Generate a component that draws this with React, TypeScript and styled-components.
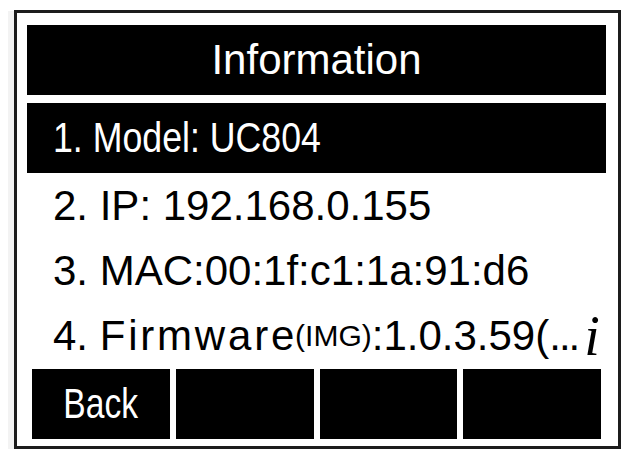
import React from "react";
import styled, { createGlobalStyle } from "styled-components";

const Global = createGlobalStyle`
  html, body { margin: 0; padding: 0; background: #ffffff; }
  body { font-family: "Liberation Sans", Arial, sans-serif; }
`;

const Frame = styled.div`
  box-sizing: border-box;
  margin: 10px 0 0 14px;
  width: 607px;
  height: 439px;
  border: 3px solid #1c1c1c;
  box-shadow: -4px 3px 0 2px #f3f3f3;
  padding: 12px 12px 7px 10px;
  display: flex;
  flex-direction: column;
  background: #ffffff;
`;

const Header = styled.div`
  height: 70px;
  flex: none;
  background: #000;
  color: #fff;
  display: flex;
  align-items: center;
  justify-content: center;
  font-size: 42px;
  line-height: 1;
  margin-bottom: 8px;
`;

const Row = styled.div<{ $selected?: boolean; $h: number }>`
  height: ${(p) => p.$h}px;
  flex: none;
  box-sizing: border-box;
  padding-left: 26px;
  display: flex;
  align-items: center;
  background: ${(p) => (p.$selected ? "#000" : "transparent")};
  color: ${(p) => (p.$selected ? "#fff" : "#000")};
  font-size: 42px;
  line-height: 1;
  white-space: nowrap;
  overflow: hidden;
`;

const Narrow = styled.span<{ $sx: number }>`
  display: inline-block;
  transform: scaleX(${(p) => p.$sx});
  transform-origin: left center;
`;

const Wide = styled.span`
  letter-spacing: 2.8px;
  margin-right: -2px;
`;

const Small = styled.span`
  font-size: 30px;
`;

const Dots = styled.span`
  letter-spacing: -2px;
`;

const InfoMark = styled.span`
  font-family: "Liberation Serif", "Times New Roman", serif;
  font-style: italic;
  font-size: 56px;
  margin-left: 6px;
`;

const Keys = styled.div`
  margin: 1px 5px 0 5px;
  height: 70px;
  flex: none;
  display: grid;
  grid-template-columns: repeat(4, 1fr);
  column-gap: 6px;
`;

const Key = styled.div`
  background: #000;
  color: #fff;
  display: flex;
  align-items: center;
  justify-content: center;
  font-size: 42px;
  line-height: 1;
`;

const KeyLabel = styled.span`
  display: inline-block;
  transform: scaleX(0.8);
`;

export default function App() {
  return (
    <>
      <Global />
      <Frame>
        <Header>Information</Header>
        <Row $selected $h={70}>
          <Narrow $sx={0.85}>1. Model: UC804</Narrow>
        </Row>
        <Row $h={65}>2. IP: 192.168.0.155</Row>
        <Row $h={65}>3. MAC:00:1f:c1:1a:91:d6</Row>
        <Row $h={65}>
          4.&nbsp;<Wide>Firmware</Wide>
          <Small>(IMG)</Small>:1.0.3.59(<Dots>...</Dots>
          <InfoMark>i</InfoMark>
        </Row>
        <Keys>
          <Key>
            <KeyLabel>Back</KeyLabel>
          </Key>
          <Key />
          <Key />
          <Key />
        </Keys>
      </Frame>
    </>
  );
}
